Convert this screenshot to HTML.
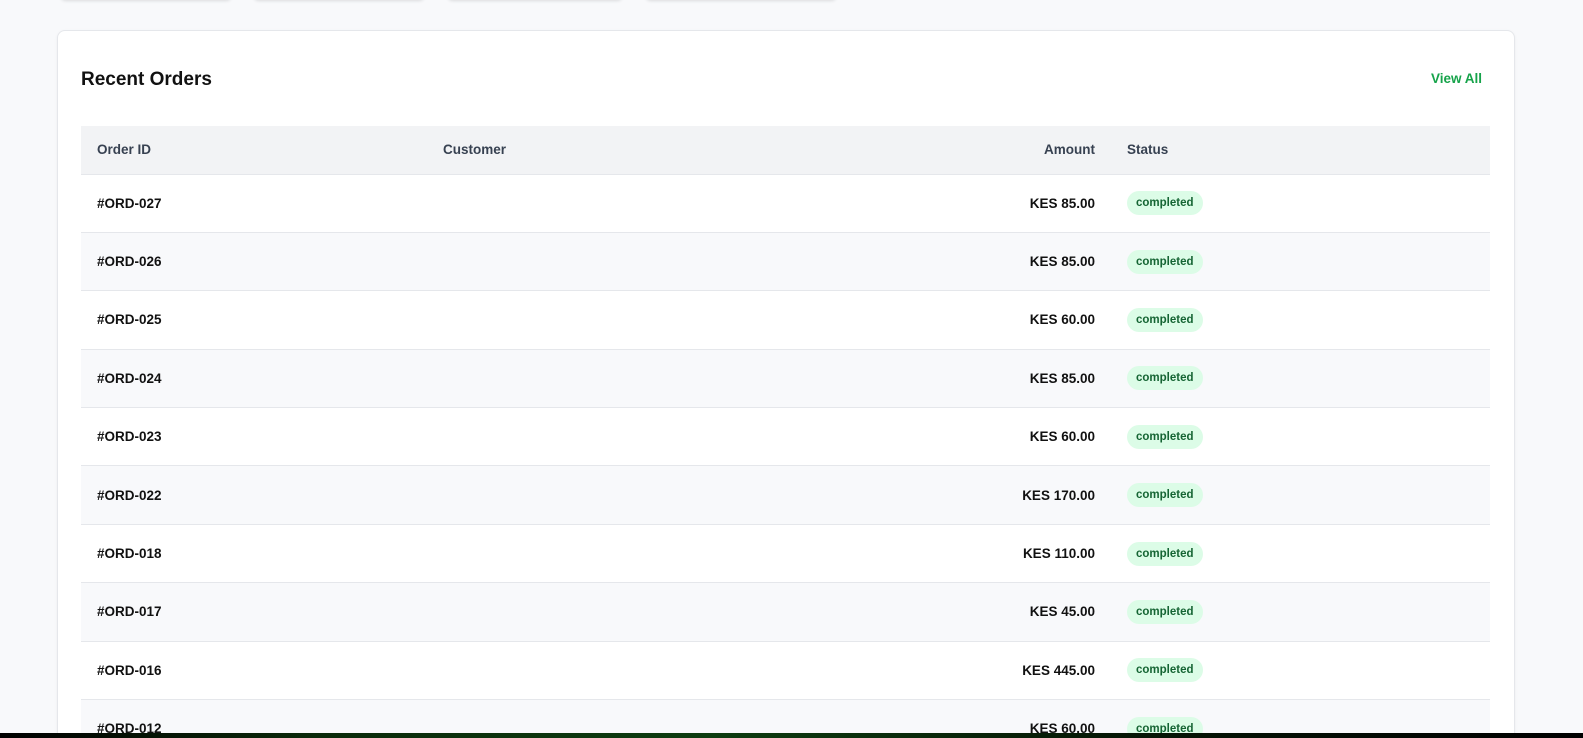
<!DOCTYPE html>
<html><head><style>
*{box-sizing:border-box;margin:0;padding:0}
html,body{width:1583px;height:738px;overflow:hidden}
body{background:#f8f9fb;font-family:"Liberation Sans",sans-serif;position:relative}
.tc{position:absolute;top:-20px;height:20px;background:#fff;border-radius:6px;box-shadow:0 1px 3px rgba(0,0,0,.12)}
.card{position:absolute;left:57px;top:30px;width:1458px;height:720px;background:#fff;border:1px solid #e5e7eb;border-radius:8px;box-shadow:0 1px 3px rgba(0,0,0,.05)}
h2{position:absolute;left:23px;top:38px;font-size:19px;font-weight:600;color:#111}
.va{position:absolute;right:32px;top:40px;font-size:13.5px;font-weight:600;color:#16a34a}
table{position:absolute;left:23px;top:95px;width:1409px;border-collapse:collapse;table-layout:fixed}
th{height:48px;background:#f2f3f5;font-size:13.5px;font-weight:600;color:#374151;text-align:left;border-bottom:1px solid #e5e7eb;padding:0 16px}
td{height:58.4px;font-size:13.5px;font-weight:600;color:#111;border-bottom:1px solid #e5e7eb;padding:0 16px}
tr:nth-child(odd) td{background:#f8f9fb}
th.r,td.r{text-align:right}
.b{display:inline-block;background:#dcfce7;color:#166534;font-size:11.5px;border-radius:13px;padding:6px 9px;font-weight:600}
.bar{position:absolute;left:0;top:733px;width:1583px;height:5px;background:linear-gradient(90deg,#000 0%,#0a2a0a 20%,#0d3d10 45%,#061806 70%,#000 100%)}
</style></head><body>
<div class="tc" style="left:60px;width:172px"></div>
<div class="tc" style="left:253px;width:172px"></div>
<div class="tc" style="left:447px;width:176px"></div>
<div class="tc" style="left:645px;width:192px"></div>
<div class="card">
<h2>Recent Orders</h2><div class="va">View All</div>
<table>
<colgroup><col style="width:346px"><col style="width:346px"><col style="width:338px"><col></colgroup>
<tr><th>Order ID</th><th>Customer</th><th class="r">Amount</th><th>Status</th></tr>
<tr><td>#ORD-027</td><td></td><td class="r">KES 85.00</td><td><span class="b">completed</span></td></tr>
<tr><td>#ORD-026</td><td></td><td class="r">KES 85.00</td><td><span class="b">completed</span></td></tr>
<tr><td>#ORD-025</td><td></td><td class="r">KES 60.00</td><td><span class="b">completed</span></td></tr>
<tr><td>#ORD-024</td><td></td><td class="r">KES 85.00</td><td><span class="b">completed</span></td></tr>
<tr><td>#ORD-023</td><td></td><td class="r">KES 60.00</td><td><span class="b">completed</span></td></tr>
<tr><td>#ORD-022</td><td></td><td class="r">KES 170.00</td><td><span class="b">completed</span></td></tr>
<tr><td>#ORD-018</td><td></td><td class="r">KES 110.00</td><td><span class="b">completed</span></td></tr>
<tr><td>#ORD-017</td><td></td><td class="r">KES 45.00</td><td><span class="b">completed</span></td></tr>
<tr><td>#ORD-016</td><td></td><td class="r">KES 445.00</td><td><span class="b">completed</span></td></tr>
<tr><td>#ORD-012</td><td></td><td class="r">KES 60.00</td><td><span class="b">completed</span></td></tr>
</table>
</div>
<div class="bar"></div>
</body></html>
